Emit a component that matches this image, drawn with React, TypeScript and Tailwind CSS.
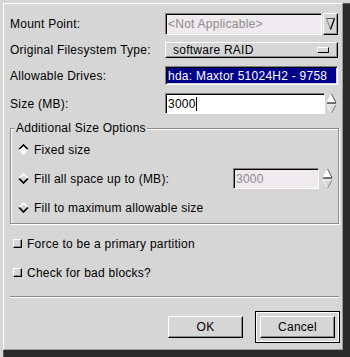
import React from "react"

const sunken =
  "border border-t-[#808080] border-l-[#808080] border-r-white border-b-white shadow-[inset_1px_1px_0_#000]"
const raised =
  "border border-t-white border-l-white border-r-black border-b-black shadow-[inset_-1px_-1px_0_#8c8c8c]"

function Radio({ on }: { on?: boolean }) {
  return (
    <svg width="11" height="11" viewBox="0 0 11 11" className="shrink-0">
      <polygon points="5.5,1 10,5.5 5.5,10 1,5.5" fill={on ? "#fff" : "#d6d6d6"} />
      <polyline points="1,5.5 5.5,1 10,5.5" fill="none" stroke={on ? "#000" : "#fff"} strokeWidth="1.6" />
      <polyline points="1,5.5 5.5,10 10,5.5" fill="none" stroke={on ? "#fff" : "#000"} strokeWidth="1.6" />
      {!on ? <polyline points="2.5,5.5 5.5,8.5 8.5,5.5" fill="none" stroke="#8c8c8c" strokeWidth="1" /> : null}
    </svg>
  )
}

function Spinner({ h }: { h: number }) {
  return (
    <svg width="11" height={h} viewBox={`0 0 11 ${h}`} className="shrink-0">
      <polygon points={`5.5,1 10,${h / 2 - 1} 1,${h / 2 - 1}`} fill="#fff" />
      <line x1="5.5" y1="1" x2="1" y2={h / 2 - 1} stroke="#fff" />
      <line x1="5.5" y1="1" x2="10" y2={h / 2 - 1} stroke="#555" />
      <line x1="1" y1={h / 2 - 0.5} x2="10" y2={h / 2 - 0.5} stroke="#000" />
      <line x1="1" y1={h / 2 + 1.5} x2="10" y2={h / 2 + 1.5} stroke="#fff" />
      <line x1="1" y1={h / 2 + 1.5} x2="5.5" y2={h - 1} stroke="#fff" />
      <line x1="10" y1={h / 2 + 1.5} x2="5.5" y2={h - 1} stroke="#808080" />
    </svg>
  )
}

function Check() {
  return <div className={`w-[9px] h-[9px] bg-[#d6d6d6] ${raised}`} />
}

export default function App() {
  return (
    <div className="w-[350px] h-[357px] overflow-hidden bg-[#d6d6d6] pl-[3px] pt-[3px] font-['Liberation_Sans',Arial,sans-serif] text-[12px] tracking-[0.25px] text-black leading-[14px]">
      <div className="w-[347px] h-[354px] bg-[#2a2a2a] border-t border-l border-[#5a5a5a]">
        <div className="w-[340px] h-[347px] -mt-px -ml-px bg-[#d6d6d6] border-t border-l border-white border-r border-b border-r-[#9a9a9a] border-b-[#9a9a9a] pl-[6px] flex flex-col">
          {/* form rows */}
          <div className="flex items-center h-[22px] mt-[9px]">
            <div className="w-[155px]">Mount Point:</div>
            <div className="flex gap-px w-[173px] h-full">
              <div className={`flex-1 bg-[#eeeaee] ${sunken} flex items-center pl-[2px] text-[#8c8c8c]`}>&lt;Not Applicable&gt;</div>
              <div className={`w-[15px] h-full ${raised} flex items-center justify-center`}>
                <svg width="9" height="12" viewBox="0 0 9 12">
                  <line x1="0.5" y1="0.5" x2="8.5" y2="0.5" stroke="#555" />
                  <line x1="0.5" y1="0.5" x2="4.5" y2="11.5" stroke="#808080" />
                  <line x1="8.5" y1="0.5" x2="4.5" y2="11.5" stroke="#000" strokeWidth="1.3" />
                </svg>
              </div>
            </div>
          </div>

          <div className="flex items-center h-[16px] mt-[7px]">
            <div className="w-[155px]">Original Filesystem Type:</div>
            <div className={`w-[173px] h-full ${raised} flex items-center justify-between pl-[7px] pr-[8px]`}>
              <span>software RAID</span>
              <div className={`w-[12px] h-[6px] ${raised} shadow-none`} />
            </div>
          </div>

          <div className="flex items-center h-[19px] mt-[8px]">
            <div className="w-[155px]">Allowable Drives:</div>
            <div className={`w-[173px] h-full ${sunken} p-px bg-[#d6d6d6] overflow-hidden`}>
              <div className="h-full bg-[#00008b] text-white whitespace-nowrap pl-px flex items-center overflow-hidden">
                hda: Maxtor 51024H2 - 9758
              </div>
            </div>
          </div>

          <div className="flex items-center h-[21px] mt-[8px]">
            <div className="w-[155px]">Size (MB):</div>
            <div className={`w-[160px] h-full bg-white ${sunken} flex items-center pl-[2px]`}>
              3000<span className="w-px h-[14px] bg-black" />
            </div>
            <div className="ml-[1px]">
              <Spinner h={21} />
            </div>
          </div>

          {/* frame */}
          <div className="relative w-[329px] h-[96px] mt-[14px] border border-[#8c8c8c] shadow-[inset_1px_1px_0_#fff,1px_1px_0_#fff] pt-[6px] pl-[7px]">
            <span className="absolute -top-[8px] left-[4px] bg-[#d6d6d6] px-px">Additional Size Options</span>
            <div className="flex items-center gap-[5px] h-[29px]">
              <Radio on />
              <span>Fixed size</span>
            </div>
            <div className="flex items-center gap-[5px] h-[29px]">
              <Radio />
              <span className="w-[194px]">Fill all space up to (MB):</span>
              <div className={`w-[86px] h-[21px] bg-[#eeeaee] ${sunken} flex items-center pl-[2px] text-[#8c8c8c]`}>3000</div>
              <div className="-ml-[2px]">
                <Spinner h={21} />
              </div>
            </div>
            <div className="flex items-center gap-[5px] h-[29px]">
              <Radio />
              <span>Fill to maximum allowable size</span>
            </div>
          </div>

          {/* checkboxes */}
          <div className="flex items-center h-[29px] mt-[5px] pl-[3px] gap-[5px]">
            <Check />
            <span>Force to be a primary partition</span>
          </div>
          <div className="flex items-center h-[29px] pl-[3px] gap-[5px]">
            <Check />
            <span>Check for bad blocks?</span>
          </div>

          <div className="w-[329px] h-[2px] mt-[9px] border-t border-t-[#8c8c8c] border-b border-b-white" />

          {/* buttons */}
          <div className="flex items-center mt-[13px] pl-[158px] gap-[12px]">
            <button className={`w-[75px] h-[22px] ${raised} bg-[#d6d6d6]`}>OK</button>
            <div className="w-[85px] h-[32px] p-[4px] border border-black shadow-[inset_1px_1px_0_#fff,inset_-1px_-1px_0_#fff]">
              <button className={`w-[75px] h-[22px] ${raised} bg-[#d6d6d6]`}>Cancel</button>
            </div>
          </div>
        </div>
      </div>
    </div>
  )
}
